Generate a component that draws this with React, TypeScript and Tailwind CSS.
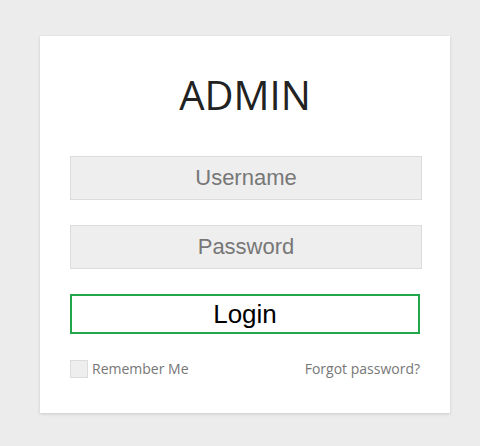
import React from "react";

export default function App() {
  return (
    <div className="min-h-[446px] w-full bg-[#ececec] pt-[36px]">
      <div className="ml-[40px] w-[410px] bg-white px-[30px] pt-[39px] pb-[35px] shadow-[0_1px_3px_rgba(0,0,0,0.15)]">
        <h1 className="text-center text-[40px] leading-none font-normal text-[#222] [font-family:'Open_Sans',sans-serif]">
          ADMIN
        </h1>
        <div className="mt-[41px] flex flex-col">
          <input
            type="text"
            placeholder="Username"
            className="h-[44px] w-[352px] border border-[#dcdcdc] bg-[#eeeeee] text-center text-[22px] text-[#333] placeholder:text-[#777] outline-none [font-family:'Liberation_Sans',Arial,sans-serif]"
          />
          <input
            type="password"
            placeholder="Password"
            className="mt-[25px] h-[44px] w-[352px] border border-[#dcdcdc] bg-[#eeeeee] text-center text-[22px] text-[#333] placeholder:text-[#777] outline-none [font-family:'Liberation_Sans',Arial,sans-serif]"
          />
          <button className="mt-[25px] h-[40px] w-[350px] border-2 border-[#21a74a] bg-white text-center text-[26px] leading-none text-black [font-family:'Liberation_Sans',Arial,sans-serif]">
            Login
          </button>
          <div className="mt-[26px] flex h-[18px] w-[350px] items-center justify-between [font-family:'Open_Sans',sans-serif] text-[14px] leading-[18px] text-[#777]">
            <label className="flex items-center gap-[4px]">
              <span className="block h-[18px] w-[18px] border border-[#dcdcdc] bg-[#eeeeee]" />
              <span>Remember Me</span>
            </label>
            <span>Forgot password?</span>
          </div>
        </div>
      </div>
    </div>
  );
}
